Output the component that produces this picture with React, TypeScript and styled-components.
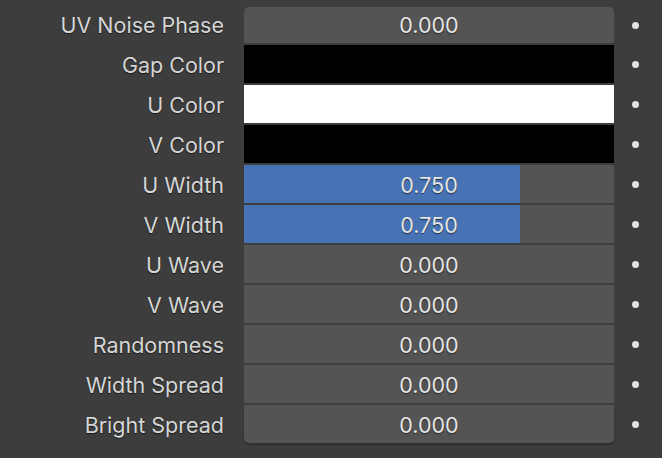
import React from 'react';
import styled, { createGlobalStyle } from 'styled-components';

const GlobalStyle = createGlobalStyle`
  html, body {
    margin: 0;
    padding: 0;
    background: #3d3d3d;
  }
  body {
    font-family: Inter, "Noto Sans", sans-serif;
  }
`;

type Field =
  | { label: string; kind: 'number'; value: number; fill?: number }
  | { label: string; kind: 'color'; color: string };

const fields: Field[] = [
  { label: 'UV Noise Phase', kind: 'number', value: 0 },
  { label: 'Gap Color', kind: 'color', color: '#000000' },
  { label: 'U Color', kind: 'color', color: '#ffffff' },
  { label: 'V Color', kind: 'color', color: '#000000' },
  { label: 'U Width', kind: 'number', value: 0.75, fill: 0.75 },
  { label: 'V Width', kind: 'number', value: 0.75, fill: 0.75 },
  { label: 'U Wave', kind: 'number', value: 0 },
  { label: 'V Wave', kind: 'number', value: 0 },
  { label: 'Randomness', kind: 'number', value: 0 },
  { label: 'Width Spread', kind: 'number', value: 0 },
  { label: 'Bright Spread', kind: 'number', value: 0 },
];

// slider track width minus the 2px of rim blender leaves
const TRACK = 368;

function App() {
  return (
    <Panel>
      <GlobalStyle />
      <Grid>
        {fields.map((f, i) => {
          const first = i === 0;
          const last = i === fields.length - 1;
          return (
            <React.Fragment key={f.label}>
              <Label $first={first}>{f.label}</Label>
              {f.kind === 'color' ? (
                <Swatch $first={first} $last={last} style={{ background: f.color }} />
              ) : (
                <Slider $first={first} $last={last}>
                  {f.fill !== undefined && (
                    <Fill style={{ width: `${Math.round(f.fill * TRACK)}px` }} />
                  )}
                  <Value>{f.value.toFixed(3)}</Value>
                </Slider>
              )}
              <Dot $first={first} />
            </React.Fragment>
          );
        })}
      </Grid>
    </Panel>
  );
}

const Panel = styled.div`
  width: 662px;
  height: 458px;
  overflow: hidden;
  background: #3d3d3d;
  padding-top: 7px;
  box-sizing: border-box;
`;

const Grid = styled.div`
  display: grid;
  grid-template-columns: 224px 370px 40px;
  column-gap: 20px;
  row-gap: 2px;
  width: fit-content;
`;

const Label = styled.div<{ $first?: boolean }>`
  height: ${(p) => (p.$first ? 36 : 38)}px;
  display: flex;
  align-items: center;
  justify-content: flex-end;
  padding-top: ${(p) => (p.$first ? 0 : 2)}px;
  box-sizing: border-box;
  font-size: 21.5px;
  color: #d6d6d6;
  text-shadow: 0 1px 1px rgba(0, 0, 0, 0.6);
  white-space: nowrap;
`;

const FieldBox = styled.div<{ $first?: boolean; $last?: boolean }>`
  height: ${(p) => (p.$first ? 36 : 38)}px;
  border-radius: ${(p) => (p.$first ? '5px 5px 0 0' : p.$last ? '0 0 5px 5px' : '0')};
  box-shadow: ${(p) => (p.$last ? '0 2px 2px rgba(0,0,0,0.25)' : 'none')};
  overflow: hidden;
`;

const Swatch = styled(FieldBox)``;

const Slider = styled(FieldBox)`
  position: relative;
  background: #545454;
  display: flex;
  align-items: center;
  justify-content: center;
  padding-top: ${(p) => (p.$first ? 0 : 2)}px;
  box-sizing: border-box;
`;

const Fill = styled.div`
  position: absolute;
  left: 0;
  top: 0;
  bottom: 0;
  background: #4772b3;
`;

const Value = styled.span`
  position: relative;
  font-size: 21.5px;
  color: #e6e6e6;
  text-shadow: 0 1px 1px rgba(0, 0, 0, 0.6);
`;

const Dot = styled.div<{ $first?: boolean }>`
  height: ${(p) => (p.$first ? 36 : 38)}px;
  display: flex;
  align-items: center;
  margin-left: -2px;

  &::before {
    content: '';
    width: 7px;
    height: 7px;
    border-radius: 50%;
    background: #e2e2e2;
  }
`;

export default App;
